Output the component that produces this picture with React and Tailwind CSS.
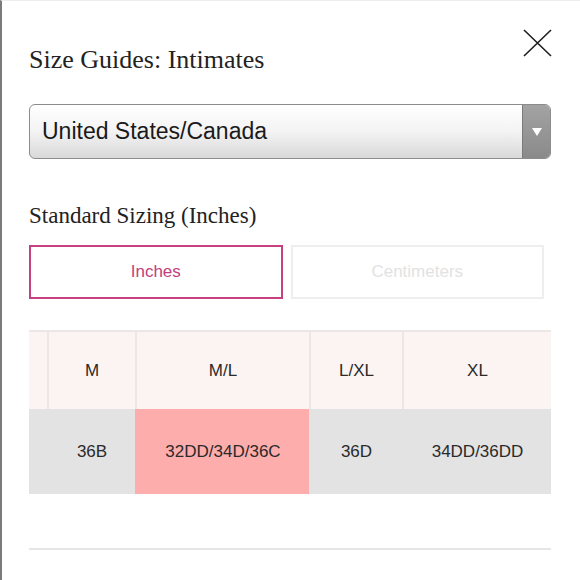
import React from 'react';

const sizes = [
    { label: 'M', fit: '36B', w: 'w-[88px]' },
    { label: 'M/L', fit: '32DD/34D/36C', w: 'w-[174px]', hot: true },
    { label: 'L/XL', fit: '36D', w: 'w-[93px]' },
    { label: 'XL', fit: '34DD/36DD', w: 'flex-1' },
];

const App = () => {
    return (
        <div className="relative w-[580px] h-[580px] overflow-hidden bg-white border-l-2 border-t border-l-[#7b7b7b] border-t-[#eeeeee] pl-[27px] pr-[29px] font-['Liberation_Sans',Arial,sans-serif]">
            {/* Close */}
            <button className="absolute top-[28px] right-[28px] w-[29px] h-[28px]">
                <svg viewBox="0 0 29 28" className="w-full h-full" fill="none" stroke="#1f1f1f" strokeWidth="1.6">
                    <path d="M1 1 L28 27 M28 1 L1 27" />
                </svg>
            </button>

            <h2 className="mt-[44px] text-[26px] leading-[30px] text-[#222] font-['Liberation_Serif','Times_New_Roman',serif]">
                Size Guides: Intimates
            </h2>

            {/* Country select */}
            <div className="mt-[29px] flex h-[55px] rounded-[6px] border border-[#8c8c8c] overflow-hidden bg-gradient-to-b from-white via-[#f3f3f3] to-[#d9d9d9]">
                <div className="flex-1 flex items-center pl-[12px] text-[23px] text-[#1a1a1a]">United States/Canada</div>
                <div className="w-[28px] flex items-center justify-center border-l border-[#7a7a7a] bg-gradient-to-b from-[#a3a3a3] to-[#8a8a8a]">
                    <svg width="10" height="8" viewBox="0 0 10 8">
                        <path d="M0 0 H10 L5 8 Z" fill="#ffffff" />
                    </svg>
                </div>
            </div>

            <h3 className="mt-[44px] text-[23px] leading-[26px] text-[#222] font-['Liberation_Serif','Times_New_Roman',serif]">
                Standard Sizing (Inches)
            </h3>

            {/* Unit toggle */}
            <div className="mt-[16px] flex gap-[8px] pr-[7px]">
                <button className="flex-1 h-[54px] border-2 border-[#c7417f] text-[#c2407c] text-[17px]">Inches</button>
                <button className="flex-1 h-[54px] border-2 border-[#eeeeee] text-[#e2e2e2] text-[17px]">Centimeters</button>
            </div>

            {/* Size table */}
            <div className="mt-[31px] text-[17px] text-[#2a2a2a]">
                <div className="flex h-[79px] bg-[#fcf4f2] border-t-2 border-[#ece7e5]">
                    <div className="w-[18px]" />
                    {sizes.map((s) => (
                        <div key={s.label} className={`${s.w} flex items-center justify-center border-l-2 border-[#ece7e5]`}>
                            {s.label}
                        </div>
                    ))}
                </div>
                <div className="flex h-[85px] bg-[#e3e3e3]">
                    <div className="w-[18px]" />
                    {sizes.map((s) => (
                        <div key={s.fit} className={`${s.w} flex items-center justify-center pl-[2px] ${s.hot ? 'bg-[#feadad]' : ''}`}>
                            {s.fit}
                        </div>
                    ))}
                </div>
            </div>

            <div className="mt-[54px] h-[2px] bg-[#e6e6e6]" />
        </div>
    );
};

export default App;
